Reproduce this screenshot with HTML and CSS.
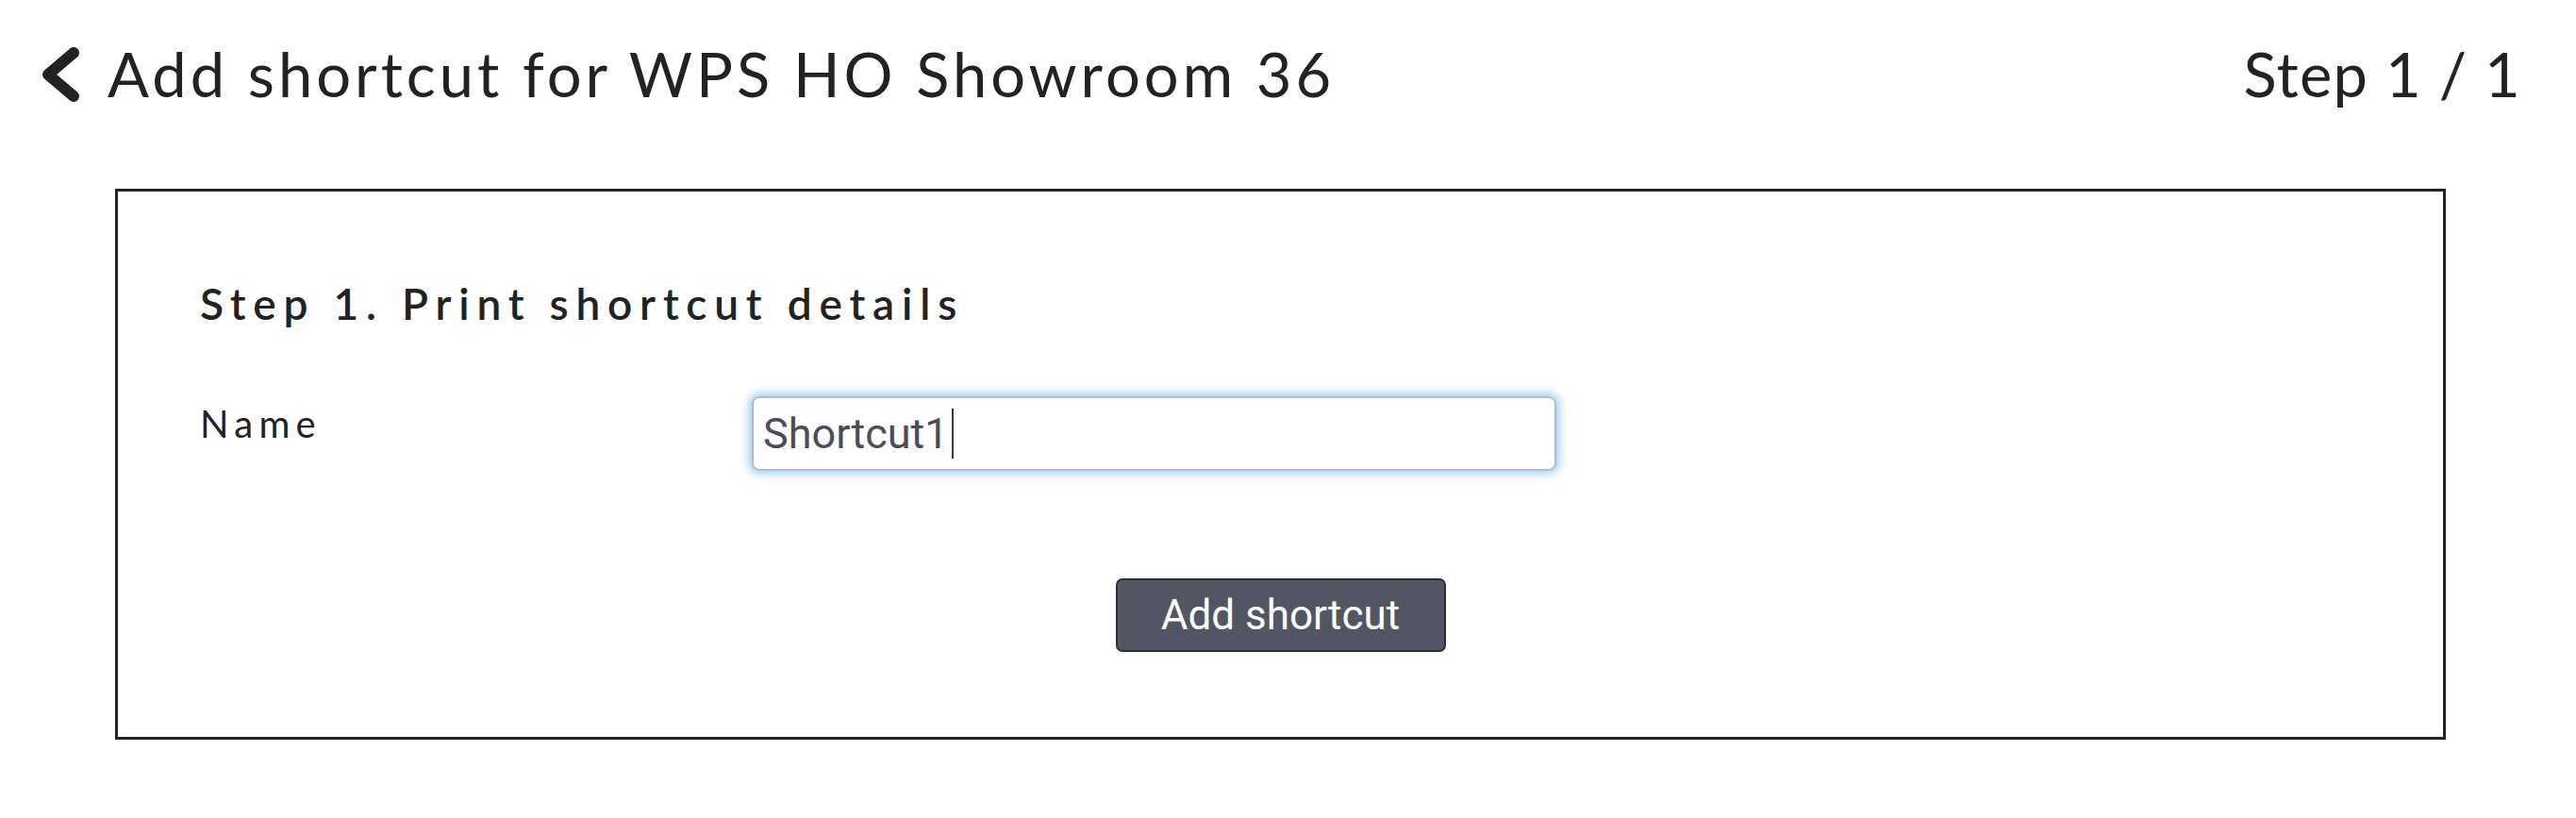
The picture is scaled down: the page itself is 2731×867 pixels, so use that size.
FILE: index.html
```html
<!DOCTYPE html>
<html lang="en">
<head>
<meta charset="utf-8">
<title>Add shortcut</title>
<link rel="stylesheet" href="styles.css">
</head>
<body>
<header class="topbar">
  <div class="title-group">
    <svg class="back-icon" width="42" height="60" viewBox="0 0 42 60" aria-hidden="true">
      <polyline points="34,7 7,30 34,53" fill="none" stroke="#222" stroke-width="12" stroke-linecap="round" stroke-linejoin="round"/>
    </svg>
    <h1 class="title">Add shortcut for WPS HO Showroom 36</h1>
  </div>
  <div class="step-count">Step 1 / 1</div>
</header>
<main class="panel">
  <h2 class="panel-heading">Step 1. Print shortcut details</h2>
  <div class="form-row">
    <label class="field-label">Name</label>
    <div class="text-input" role="textbox"><span class="input-value">Shortcut1</span><span class="caret"></span></div>
  </div>
  <div class="actions">
    <button class="primary-btn" type="button">Add shortcut</button>
  </div>
</main>
</body>
</html>
```
FILE: styles.css
```css
html, body {
  margin: 0;
  padding: 0;
  background: #ffffff;
}
body {
  padding: 0 58px 0 44px;
  font-family: "Lato", "Noto Sans", sans-serif;
  color: #222222;
}
.topbar {
  height: 156px;
  display: flex;
  align-items: center;
  justify-content: space-between;
}
.title-group {
  display: flex;
  align-items: center;
  gap: 28px;
}
.back-icon {
  display: block;
  margin-top: 2px;
}
.title {
  margin: 0;
  font-size: 65px;
  font-weight: 400;
  line-height: 1;
  letter-spacing: 4px;
  color: #222222;
}
.step-count {
  font-size: 65px;
  line-height: 1;
  letter-spacing: 1.2px;
  color: #222222;
}
.panel {
  margin: 44px 80px 0 78px;
  border: 3px solid #222222;
  padding: 96px 87px 90px 87px;
}
.panel-heading {
  margin: 0;
  font-size: 46px;
  font-weight: 600;
  letter-spacing: 7.8px;
  line-height: 46px;
}
.form-row {
  display: grid;
  grid-template-columns: 585px 853px;
  align-items: center;
  margin-top: 75px;
}
.field-label {
  font-size: 40px;
  letter-spacing: 6.3px;
  line-height: 46px;
  align-self: start;
  padding-top: 6px;
}
.text-input {
  box-sizing: border-box;
  height: 79px;
  border: 2px solid #b9b9b9;
  border-radius: 8px;
  box-shadow: 0 0 10px 3px rgba(102, 175, 233, 0.65);
  display: flex;
  align-items: center;
  padding: 0 10px;
  font-family: "Roboto", "Liberation Sans", sans-serif;
  font-size: 45px;
  color: #4a4d58;
}
.caret {
  display: inline-block;
  width: 2px;
  height: 53px;
  background: #3a3c44;
  margin-left: 3px;
}
.actions {
  display: flex;
  justify-content: center;
  margin-top: 114px;
}
.primary-btn {
  box-sizing: border-box;
  width: 350px;
  height: 78px;
  background: #525664;
  border: 2px solid #2e3039;
  border-radius: 7px;
  color: #ffffff;
  font-family: "Roboto", "Liberation Sans", sans-serif;
  font-size: 44px;
  padding: 0;
}
```
